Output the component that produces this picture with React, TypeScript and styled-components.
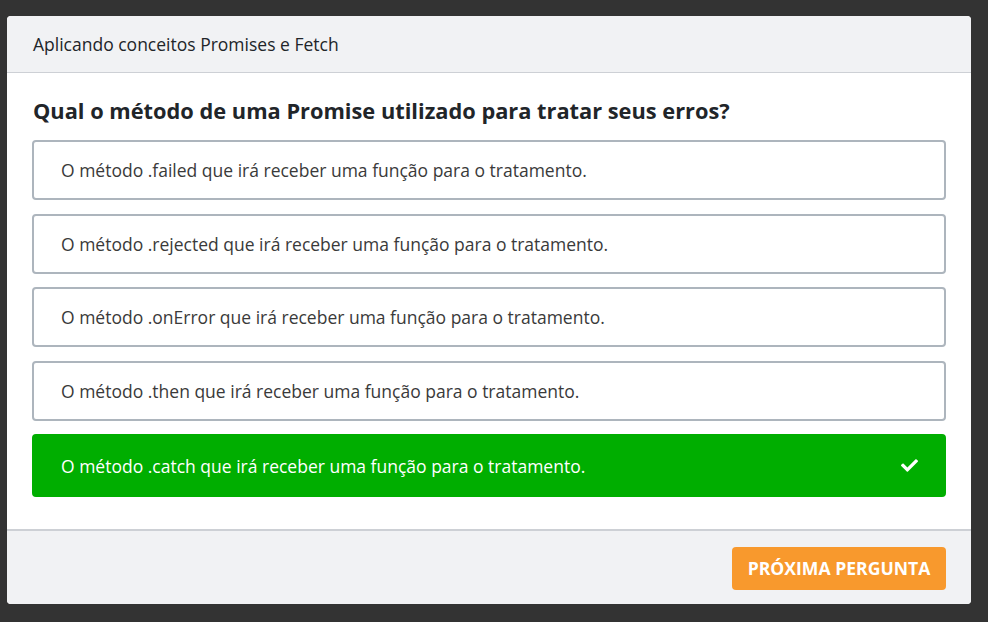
import React from 'react';
import styled, { createGlobalStyle } from 'styled-components';
import { FaCheck } from 'react-icons/fa';

const GlobalStyle = createGlobalStyle`
  html, body {
    margin: 0;
    padding: 0;
    background-color: #333333;
    font-family: 'Open Sans', 'Noto Sans', sans-serif;
  }
`;

const Page = styled.div`
  width: 988px;
  height: 622px;
  padding: 16px 17px 18px 7px;
  box-sizing: border-box;
`;

const Card = styled.div`
  width: 964px;
  background-color: #fff;
  border-radius: 4px;
  overflow: hidden;
  display: flex;
  flex-direction: column;
`;

const Header = styled.div`
  height: 56px;
  display: flex;
  align-items: center;
  padding: 0 26px;
  background-color: #f1f2f4;
  border-bottom: 1px solid #cdd0d5;
  color: #212529;
  font-size: 17.5px;
`;

const Body = styled.div`
  padding: 23px 25px 32px;
  display: flex;
  flex-direction: column;
`;

const Question = styled.h2`
  margin: 0 0 14px 1px;
  font-size: 21.8px;
  line-height: 30px;
  font-weight: 700;
  color: #212529;
`;

const Options = styled.div`
  display: flex;
  flex-direction: column;
  gap: 13.5px;
`;

const Option = styled.button<{ $correct?: boolean }>`
  display: flex;
  align-items: center;
  justify-content: space-between;
  width: 100%;
  height: ${p => (p.$correct ? '63px' : '60px')};
  padding: 0 26px 0 27px;
  box-sizing: border-box;
  border: 2px solid ${p => (p.$correct ? '#00ae00' : '#adb5bd')};
  border-radius: 4px;
  background-color: ${p => (p.$correct ? '#00ae00' : '#fff')};
  color: ${p => (p.$correct ? '#fff' : '#3a3a3a')};
  font-family: inherit;
  font-size: 17.5px;
  text-align: left;
  cursor: pointer;
`;

const Footer = styled.div`
  height: 75px;
  display: flex;
  align-items: center;
  justify-content: flex-end;
  padding: 0 25px;
  background-color: #f1f2f4;
  border-top: 2px solid #cdd0d5;
  box-sizing: border-box;
`;

const NextButton = styled.button`
  width: 214px;
  height: 43px;
  margin-top: 1px;
  border: none;
  border-radius: 4px;
  background-color: #f8992d;
  color: #fff;
  font-family: inherit;
  font-size: 17.6px;
  font-weight: 700;
  text-transform: uppercase;
  cursor: pointer;
`;

const options = [
  { text: 'O método .failed que irá receber uma função para o tratamento.' },
  { text: 'O método .rejected que irá receber uma função para o tratamento.' },
  { text: 'O método .onError que irá receber uma função para o tratamento.' },
  { text: 'O método .then que irá receber uma função para o tratamento.' },
  { text: 'O método .catch que irá receber uma função para o tratamento.', correct: true },
];

export default function App() {
  return (
    <>
      <GlobalStyle />
      <Page>
        <Card>
          <Header>Aplicando conceitos Promises e Fetch</Header>
          <Body>
            <Question>Qual o método de uma Promise utilizado para tratar seus erros?</Question>
            <Options>
              {options.map(o => (
                <Option key={o.text} $correct={o.correct}>
                  <span>{o.text}</span>
                  {o.correct && <FaCheck size={17} />}
                </Option>
              ))}
            </Options>
          </Body>
          <Footer>
            <NextButton>Próxima pergunta</NextButton>
          </Footer>
        </Card>
      </Page>
    </>
  );
}
